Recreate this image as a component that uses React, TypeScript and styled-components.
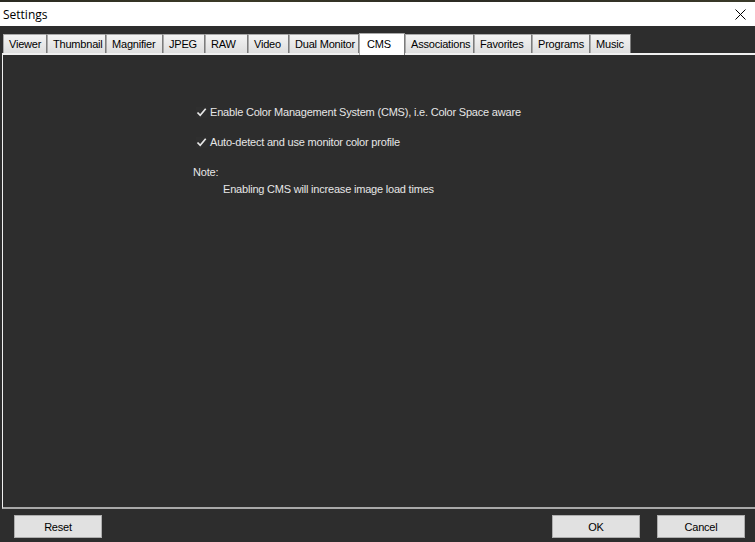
import React, { useState } from 'react';
import styled, { createGlobalStyle } from 'styled-components';

const Global = createGlobalStyle`
  html, body {
    margin: 0;
    padding: 0;
    background: #2d2d2d;
  }
  body {
    font-family: 'Liberation Sans', Arial, sans-serif;
    font-size: 11px;
    letter-spacing: -0.2px;
  }
`;

const Window = styled.div`
  width: 755px;
  height: 542px;
  display: flex;
  flex-direction: column;
  background: #2d2d2d;
  overflow: hidden;
`;

const Desktop = styled.div`
  height: 2px;
  background: linear-gradient(90deg, #2a2a22 0%, #3b3a26 30%, #2c2b24 60%, #3a3928 100%);
`;

const TitleBar = styled.div`
  height: 24px;
  background: #ffffff;
  display: flex;
  align-items: center;
  justify-content: space-between;
  padding: 0 9px 0 3px;
  color: #000;
  font-family: 'Open Sans', 'Liberation Sans', sans-serif;
  font-size: 12px;
  letter-spacing: 0;
`;

const CloseIcon = () => (
  <svg width="11" height="11" viewBox="0 0 11 11">
    <path d="M0.5 0.5 L10.5 10.5 M10.5 0.5 L0.5 10.5" stroke="#000" strokeWidth="1" />
  </svg>
);

const TabStrip = styled.div`
  display: flex;
  align-items: flex-end;
  height: 21px;
  margin-top: 6px;
  padding-left: 3px;
  position: relative;
  z-index: 1;
`;

const Tab = styled.div<{ $active?: boolean; $w: number }>`
  box-sizing: border-box;
  height: ${p => (p.$active ? '22px' : '19px')};
  margin-bottom: ${p => (p.$active ? '-2px' : '0')};
  width: ${p => p.$w}px;
  padding: ${p => (p.$active ? '2px 0 0 7px' : '1px 0 0 5px')};
  border: 1px solid #a9a9a9;
  border-bottom: none;
  border-right-color: #7c7c7c;
  background: ${p => (p.$active ? '#ffffff' : 'linear-gradient(#f3f3f3, #dedede)')};
  color: #000;
  font-size: 11px;
  line-height: 16px;
  white-space: nowrap;
  cursor: default;
`;

const Panel = styled.div`
  flex: 1;
  margin-left: 2px;
  border-top: 2px solid #f0f0f0;
  border-left: 1px solid #f0f0f0;
  border-bottom: 2px solid #a8a8a8;
  display: flex;
  flex-direction: column;
  padding: 49px 0 0 190px;
  color: #e6e6e6;
`;

const Row = styled.label`
  display: flex;
  align-items: center;
  gap: 3px;
  height: 16px;
  margin-left: 3px;
  margin-bottom: 14px;
  cursor: default;
`;

const Box = styled.span`
  width: 11px;
  height: 11px;
  display: flex;
  align-items: center;
  justify-content: center;
  background: #2f2f2f;
`;

const Check = ({ on }: { on: boolean }) => (
  <Box>
    {on && (
      <svg width="11" height="11" viewBox="0 0 11 11">
        <path d="M1.5 5.5 L4.2 8.3 L9.7 1.8" fill="none" stroke="#e8e8e8" strokeWidth="1.7" />
      </svg>
    )}
  </Box>
);

const NoteLabel = styled.div`
  margin-top: 1px;
  line-height: 14px;
`;

const NoteText = styled.div`
  margin-left: 30px;
  margin-top: 3px;
  line-height: 14px;
`;

const Footer = styled.div`
  box-sizing: border-box;
  height: 33px;
  display: flex;
  align-items: flex-start;
  padding: 6px 10px 0 14px;
  gap: 17px;
`;

const Button = styled.button<{ $push?: boolean }>`
  width: 88px;
  height: 23px;
  margin-left: ${p => (p.$push ? 'auto' : '0')};
  background: #e1e1e1;
  border: 1px solid #adadad;
  color: #000;
  font-family: 'Liberation Sans', Arial, sans-serif;
  font-size: 11px;
  letter-spacing: -0.2px;
  padding: 0;
`;

const tabs: [string, number][] = [
  ['Viewer', 44],
  ['Thumbnail', 59],
  ['Magnifier', 57],
  ['JPEG', 42],
  ['RAW', 43],
  ['Video', 41],
  ['Dual Monitor', 70],
  ['CMS', 46],
  ['Associations', 69],
  ['Favorites', 58],
  ['Programs', 58],
  ['Music', 41],
];

export default function App() {
  const [active, setActive] = useState('CMS');
  const [cms, setCms] = useState(true);
  const [auto, setAuto] = useState(true);

  return (
    <Window>
      <Global />
      <Desktop />
      <TitleBar>
        <span>Settings</span>
        <CloseIcon />
      </TitleBar>
      <TabStrip>
        {tabs.map(([name, w]) => (
          <Tab key={name} $w={w} $active={name === active} onClick={() => setActive(name)}>
            {name}
          </Tab>
        ))}
      </TabStrip>
      <Panel>
        <Row onClick={() => setCms(!cms)}>
          <Check on={cms} />
          Enable Color Management System (CMS), i.e. Color Space aware
        </Row>
        <Row onClick={() => setAuto(!auto)}>
          <Check on={auto} />
          Auto-detect and use monitor color profile
        </Row>
        <NoteLabel>Note:</NoteLabel>
        <NoteText>Enabling CMS will increase image load times</NoteText>
      </Panel>
      <Footer>
        <Button>Reset</Button>
        <Button $push>OK</Button>
        <Button>Cancel</Button>
      </Footer>
    </Window>
  );
}
